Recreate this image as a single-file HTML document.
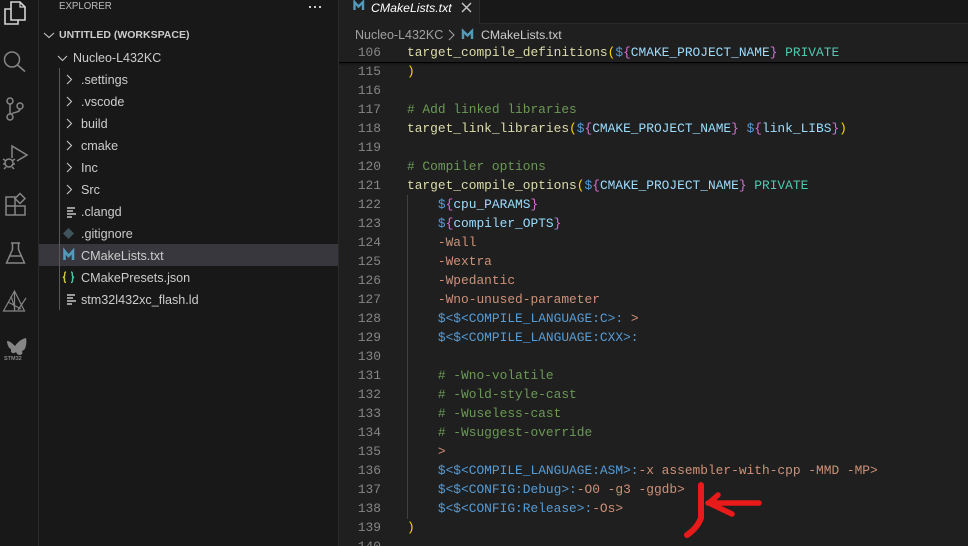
<!DOCTYPE html>
<html>
<head>
<meta charset="utf-8">
<style>
html,body{margin:0;padding:0;background:#1f1f1f}
#r{position:relative;width:968px;height:546px;overflow:hidden;background:#1f1f1f;font-family:"Liberation Sans",sans-serif}
.a{position:absolute}
.t{position:absolute;white-space:pre;font-size:12.6px;color:#cccccc;line-height:22px;height:22px}
.l{position:absolute;left:340px;width:41px;text-align:right;font:12.87px/19px "Liberation Mono",monospace;color:#858585;height:19px}
.c{position:absolute;left:407px;white-space:pre;font:12.87px/19px "Liberation Mono",monospace;color:#cccccc;height:19px}
.y{color:#dcdcaa}.o{color:#ffd700}.p{color:#da70d6}.b{color:#9cdcfe}.d{color:#569cd6}.g{color:#6a9955}.s{color:#ce9178}.k{color:#4ec9b0}
</style>
</head>
<body>
<div id="r">
<div class="a" style="left:0;top:0;width:338px;height:546px;background:#181818"></div>
<div class="a" style="left:38px;top:0;width:1px;height:546px;background:#2b2b2b"></div>
<div class="a" style="left:338px;top:0;width:1px;height:546px;background:#2b2b2b"></div>
<div class="a" style="left:339px;top:0;width:629px;height:23px;background:#181818"></div>
<div class="a" style="left:339px;top:23px;width:629px;height:1px;background:#2b2b2b"></div>
<div class="a" style="left:339px;top:0;width:140px;height:24px;background:#1f1f1f"></div>
<div class="a" style="left:479px;top:0;width:1px;height:24px;background:#2b2b2b"></div>

<svg class="a" style="left:0;top:0" width="38" height="546" fill="none" stroke="#868686" stroke-width="1.5">
<path d="M11 9H5v15h13v-4" stroke="#d4d4d4" stroke-width="1.6"/>
<path d="M11 20V2h9l5 5v13H11z" stroke="#d4d4d4" stroke-width="1.6"/>
<path d="M20 2v5h5" stroke="#d4d4d4" stroke-width="1.2"/>
<circle cx="12" cy="59.500" r="7.500"/><path d="M17.500 65l7.500 6.500"/>
<circle cx="10" cy="101" r="3"/><circle cx="10" cy="117" r="3"/><circle cx="20" cy="106" r="3"/>
<path d="M10 104v10M20 109c0 4-8 3-9 5.500"/>
<path d="M12 158V146l15 9-10 6"/>
<circle cx="9" cy="163" r="4"/><path d="M3 159l3 2M15 159l-3 2M3 164h2M13 164h2M4 169l2-2M14 169l-2-2"/>
<path d="M6 197h9v9H6zM6 206h9v9H6zM15 206h10v9H15z"/><path d="M20 193.500l5 5-5 5-5-5z"/>
<path d="M11 243h9M12.500 243v6.500l-6 13.500h18l-6-13.500v-6.500"/><path d="M9 256h13"/>
<path d="M3.500 311l11-20 10 20zM14.500 291v20M8 302l13 7M26 298l-8 12M11 296l4 13" stroke-width="1.200"/>
<path d="M7 341c3 0 6 3 8 5 2-3 6-7 11-8 1 4 0 10-2 12l-2 1c1 2 0 4-2 4s-3-1-4-3c-1 1-3 2-5 0l0-3c-2 0-4-5-4-8z" fill="#868686" stroke="none"/>
<text x="4" y="360" font-family="Liberation Sans" font-size="5.500" font-weight="bold" fill="#868686" stroke="none">STM32</text>
</svg>

<div class="t" style="left:59px;top:-4px;font-size:9.7px;color:#bbbbbb">EXPLORER</div>
<div class="a" style="left:309px;top:6px;width:2px;height:2px;background:#ccc;box-shadow:5px 0 #ccc,10px 0 #ccc"></div>
<div class="t" style="left:59px;top:24px;font-size:10.5px;font-weight:bold;color:#cccccc">UNTITLED (WORKSPACE)</div>
<div class="t" style="left:73px;top:47px;font-size:12.5px">Nucleo-L432KC</div>
<div class="a" style="left:39px;top:244px;width:299px;height:22px;background:#37373d"></div>
<div class="a" style="left:59px;top:68px;width:1px;height:242px;background:#585858"></div>

<svg class="a" style="left:39px;top:24px" width="60" height="180" fill="none" stroke="#c5c5c5" stroke-width="1.1">
<path d="M5 9l5 4.500L15 9M19 32l4.500 4.500L28 32"/>
<path d="M28 51l4.500 4.500L28 60M28 73l4.500 4.500L28 82M28 95l4.500 4.500L28 104M28 117l4.500 4.500L28 126M28 139l4.500 4.500L28 148M28 161l4.500 4.500L28 170"/>
</svg>

<div class="t" style="left:81px;top:69px">.settings</div>
<div class="t" style="left:81px;top:91px">.vscode</div>
<div class="t" style="left:81px;top:113px">build</div>
<div class="t" style="left:81px;top:135px">cmake</div>
<div class="t" style="left:81px;top:157px">Inc</div>
<div class="t" style="left:81px;top:179px">Src</div>
<div class="t" style="left:81px;top:201px">.clangd</div>
<div class="t" style="left:81px;top:223px">.gitignore</div>
<div class="t" style="left:81px;top:245px">CMakeLists.txt</div>
<div class="t" style="left:81px;top:267px">CMakePresets.json</div>
<div class="t" style="left:81px;top:289px">stm32l432xc_flash.ld</div>

<svg class="a" style="left:60px;top:200px" width="20" height="110" fill="none">
<path d="M7 8h8M7 11h6M7 14h9M7 17h5" stroke="#c5c5c5" stroke-width="1.400"/>
<path d="M8.500 28l5.500 5.500L8.500 39 3 33.500z" fill="#41535b"/>
<path d="M4.500 60V51l4 5 4.500-5v9" stroke="#519aba" stroke-width="2.600"/>
<path d="M6 72c-2 0-1 3-1.500 4S3 77.500 3 77.500s1.500 0 1.500 1-.5 4 1.500 4" stroke="#cbcb41" stroke-width="1.400"/>
<path d="M11 72c2 0 1 3 1.500 4s1.500 1.500 1.500 1.500-1.500 0-1.500 1 .5 4-1.500 4" stroke="#4ec9b0" stroke-width="1.400"/>
<path d="M7 96h8M7 99h6M7 102h9M7 105h5" stroke="#c5c5c5" stroke-width="1.400" transform="translate(0,-1)"/>
</svg>

<svg class="a" style="left:352px;top:0" width="14" height="12" fill="none"><path d="M2.500 10V2l4 4.500L11 2v8" stroke="#519aba" stroke-width="2.400"/></svg>
<div class="t" style="left:371px;top:-3px;font-style:italic;font-size:12.3px;color:#ffffff">CMakeLists.txt</div>
<svg class="a" style="left:460px;top:1px" width="14" height="14" fill="none"><path d="M2 2l9 9M11 2l-9 9" stroke="#cccccc" stroke-width="1.300"/></svg>

<div class="t" style="left:355px;top:24px;font-size:12.5px;color:#a0a0a0">Nucleo-L432KC</div>
<svg class="a" style="left:448px;top:28px" width="30" height="14" fill="none"><path d="M1 2l5 5-5 5" stroke="#a0a0a0" stroke-width="1.100"/><path d="M15 11V3l4.500 4.500L24 3v8" stroke="#519aba" stroke-width="2.400"/></svg>
<div class="t" style="left:481px;top:24px;font-size:12.3px">CMakeLists.txt</div>

<div class="a" style="left:339px;top:62px;width:629px;height:1px;background:#000"></div>
<div class="a" style="left:339px;top:63px;width:629px;height:3px;background:linear-gradient(#141414,#1f1f1f)"></div>
<div class="a" style="left:407px;top:195px;width:1px;height:324px;background:#404040"></div>

<div class="l" style="top:43px">106</div><div class="c" style="top:43px"><span class="y">target_compile_definitions</span><span class="o">(</span><span class="d">$</span><span class="p">{</span><span class="b">CMAKE_PROJECT_NAME</span><span class="p">}</span> <span class="k">PRIVATE</span></div>
<div class="l" style="top:62px">115</div><div class="c" style="top:62px"><span class="o">)</span></div>
<div class="l" style="top:81px">116</div>
<div class="l" style="top:100px">117</div><div class="c g" style="top:100px"># Add linked libraries</div>
<div class="l" style="top:119px">118</div><div class="c" style="top:119px"><span class="y">target_link_libraries</span><span class="o">(</span><span class="d">$</span><span class="p">{</span><span class="b">CMAKE_PROJECT_NAME</span><span class="p">}</span> <span class="d">$</span><span class="p">{</span><span class="b">link_LIBS</span><span class="p">}</span><span class="o">)</span></div>
<div class="l" style="top:138px">119</div>
<div class="l" style="top:157px">120</div><div class="c g" style="top:157px"># Compiler options</div>
<div class="l" style="top:176px">121</div><div class="c" style="top:176px"><span class="y">target_compile_options</span><span class="o">(</span><span class="d">$</span><span class="p">{</span><span class="b">CMAKE_PROJECT_NAME</span><span class="p">}</span> <span class="k">PRIVATE</span></div>
<div class="l" style="top:195px">122</div><div class="c" style="top:195px">    <span class="d">$</span><span class="p">{</span><span class="b">cpu_PARAMS</span><span class="p">}</span></div>
<div class="l" style="top:214px">123</div><div class="c" style="top:214px">    <span class="d">$</span><span class="p">{</span><span class="b">compiler_OPTS</span><span class="p">}</span></div>
<div class="l" style="top:233px">124</div><div class="c s" style="top:233px">    -Wall</div>
<div class="l" style="top:252px">125</div><div class="c s" style="top:252px">    -Wextra</div>
<div class="l" style="top:271px">126</div><div class="c s" style="top:271px">    -Wpedantic</div>
<div class="l" style="top:290px">127</div><div class="c s" style="top:290px">    -Wno-unused-parameter</div>
<div class="l" style="top:309px">128</div><div class="c" style="top:309px">    <span class="d">$&lt;$&lt;COMPILE_LANGUAGE:C&gt;:</span> <span class="s">&gt;</span></div>
<div class="l" style="top:328px">129</div><div class="c" style="top:328px">    <span class="d">$&lt;$&lt;COMPILE_LANGUAGE:CXX&gt;:</span></div>
<div class="l" style="top:347px">130</div>
<div class="l" style="top:366px">131</div><div class="c g" style="top:366px">    # -Wno-volatile</div>
<div class="l" style="top:385px">132</div><div class="c g" style="top:385px">    # -Wold-style-cast</div>
<div class="l" style="top:404px">133</div><div class="c g" style="top:404px">    # -Wuseless-cast</div>
<div class="l" style="top:423px">134</div><div class="c g" style="top:423px">    # -Wsuggest-override</div>
<div class="l" style="top:442px">135</div><div class="c s" style="top:442px">    &gt;</div>
<div class="l" style="top:461px">136</div><div class="c" style="top:461px">    <span class="d">$&lt;$&lt;COMPILE_LANGUAGE:ASM&gt;:</span><span class="s">-x assembler-with-cpp -MMD -MP&gt;</span></div>
<div class="l" style="top:480px">137</div><div class="c" style="top:480px">    <span class="d">$&lt;$&lt;CONFIG:Debug&gt;:</span><span class="s">-O0 -g3 -ggdb&gt;</span></div>
<div class="l" style="top:499px">138</div><div class="c" style="top:499px">    <span class="d">$&lt;$&lt;CONFIG:Release&gt;:</span><span class="s">-Os&gt;</span></div>
<div class="l" style="top:518px">139</div><div class="c" style="top:518px"><span class="o">)</span></div>
<div class="l" style="top:537px">140</div>

<svg class="a" style="left:670px;top:470px" width="100" height="76" fill="none" stroke="#e81a1a" stroke-linecap="round" stroke-linejoin="round">
<path d="M31 15L31 48C28 56 23 61 17 65" stroke-width="6"/>
<path d="M89 33L38 33M48 25L39 33M41 34L62 44" stroke-width="5.500"/>
</svg>
</div>
</body>
</html>
